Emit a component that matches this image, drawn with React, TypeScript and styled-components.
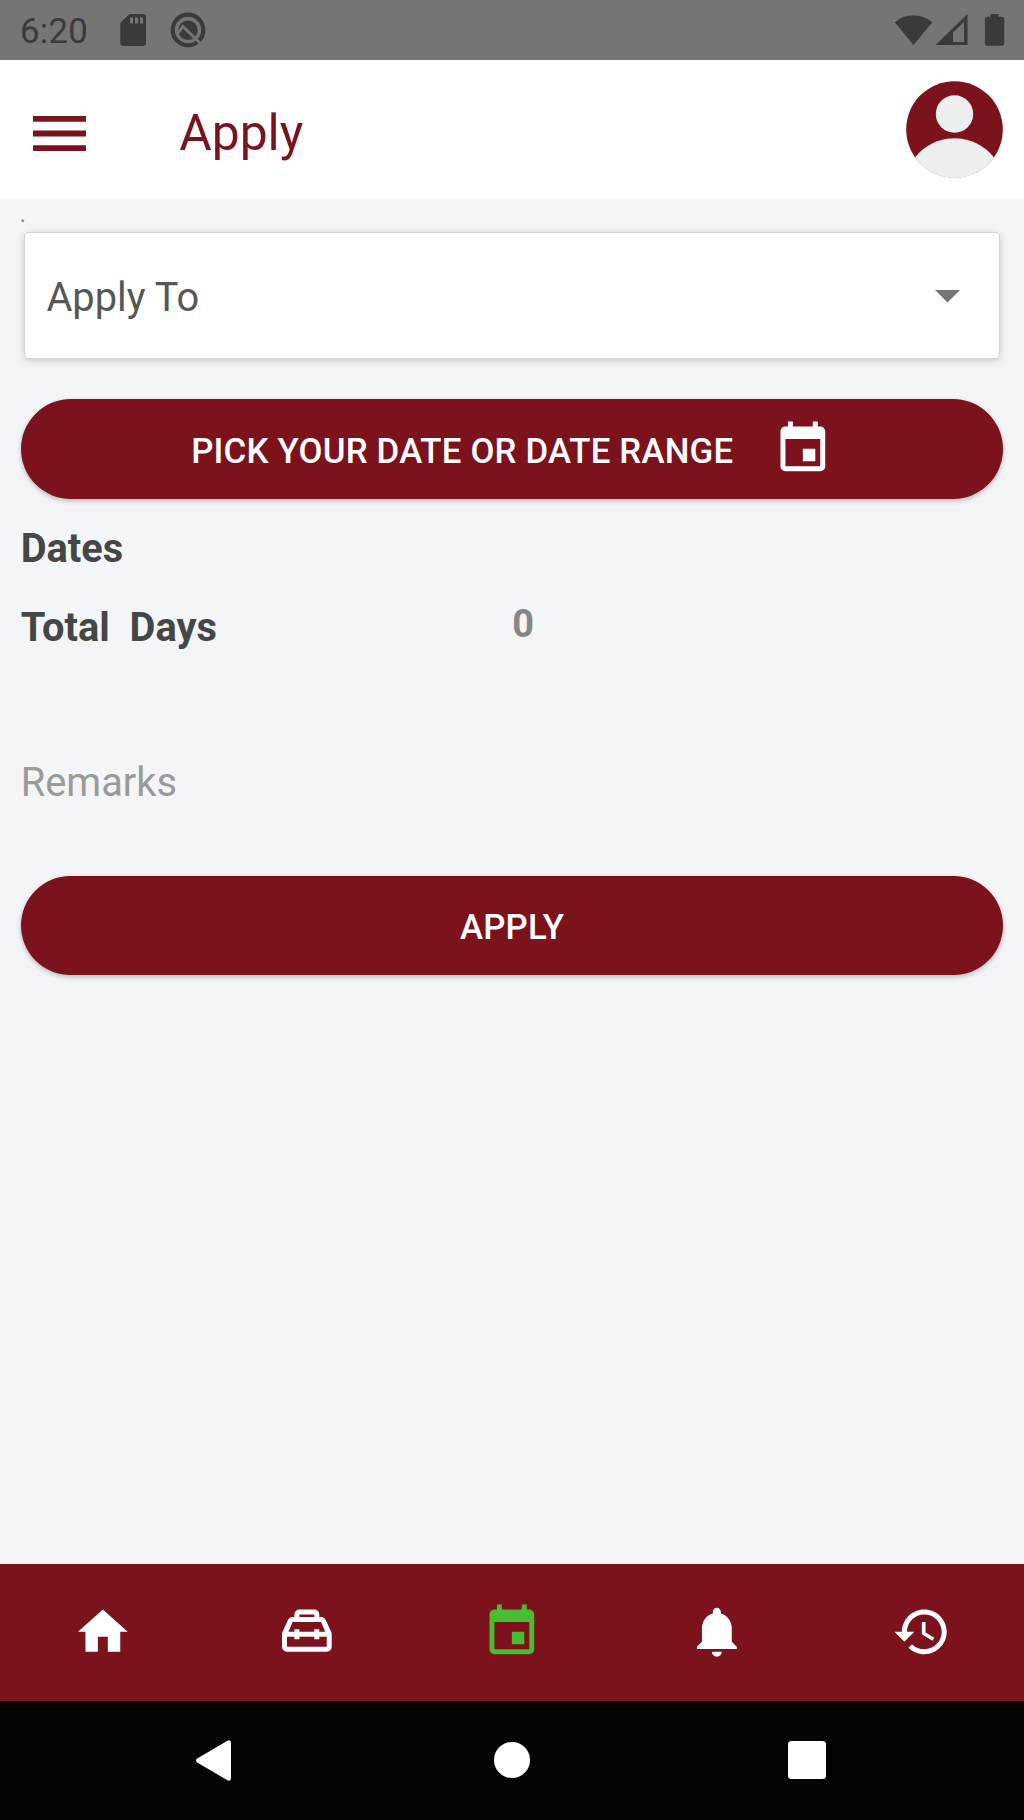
import React from 'react';
import styled, { createGlobalStyle } from 'styled-components';

const maroon = '#7c121b';

const GlobalStyle = createGlobalStyle`
  * { box-sizing: border-box; }
  body { margin: 0; background: #f4f5f7; font-family: Roboto, 'Liberation Sans', sans-serif; }
  svg { display: block; flex: none; }
`;

const Screen = styled.div`
  width: 1024px;
  height: 1820px;
  display: flex;
  flex-direction: column;
  overflow: hidden;
  background: #f4f5f7;
`;

const StatusBar = styled.header`
  flex: none;
  height: 59.7px;
  display: flex;
  justify-content: space-between;
  background: #757575;
  color: #3a3a3a;
`;

const StatusGroup = styled.div`
  display: flex;
  align-items: flex-start;
`;

const Clock = styled.span`
  width: 100px;
  padding-left: 20px;
  font-size: 34.8px;
  line-height: 63px;
  letter-spacing: 0.2px;
`;

const AppBar = styled.div`
  flex: none;
  height: 139.5px;
  display: flex;
  align-items: center;
  padding: 0 20.7px 0 32.6px;
  background: #fff;
`;

const MenuButton = styled.button`
  border: 0;
  padding: 8px 0 0;
  background: none;
`;

const Title = styled.h1`
  flex: 1;
  margin: 0;
  padding: 8px 0 0 93.6px;
  color: ${maroon};
  font-size: 49.8px;
  line-height: 60px;
  font-weight: 400;
`;

const Form = styled.main`
  flex: 1;
  display: flex;
  flex-direction: column;
  padding: 14px 20.7px 0;
`;

const Dot = styled.span`
  height: 19.4px;
  margin-left: -0.7px;
  font-size: 20px;
  font-weight: 500;
  line-height: 5px;
  color: #8c8c8c;
`;

const Select = styled.div`
  height: 125px;
  margin: 0 4.7px;
  display: flex;
  align-items: center;
  justify-content: space-between;
  padding: 3px 38.2px 0 21px;
  border-radius: 4px;
  background: #fff;
  box-shadow: 0 0 0 1px #d3d4d5, 0 2px 8px rgba(0, 0, 0, 0.22);
  color: #555756;
  font-size: 39.8px;
  line-height: 46px;

  span { padding-top: 3px; }
`;

const PillButton = styled.button<{ $top: number }>`
  flex: none;
  height: 99.5px;
  margin-top: ${p => p.$top}px;
  padding: 0;
  border: 0;
  border-radius: 50px;
  display: flex;
  align-items: center;
  justify-content: center;
  gap: 39.8px;
  background: ${maroon};
  box-shadow: 0 2px 5px rgba(0, 0, 0, 0.25);
  color: #fff;
  font: 500 34.8px/44px Roboto, 'Liberation Sans', sans-serif;
  letter-spacing: 0.2px;

  span { padding-top: 4px; }
`;

const Row = styled.div<{ $top: number }>`
  display: grid;
  grid-template-columns: 491.5px 1fr;
  margin-top: ${p => p.$top}px;
  font-size: 39.8px;
  line-height: 46px;
  font-weight: 700;
`;

const Label = styled.span`
  color: #454746;
  white-space: pre;
`;

const Value = styled.span`
  color: #858786;
  font-size: 38px;
  line-height: 39px;
`;

const Remarks = styled.div`
  margin-top: 109.2px;
  color: #999b9a;
  font-size: 39.8px;
  line-height: 46px;
`;

const TabBar = styled.nav`
  flex: none;
  height: 136.6px;
  display: grid;
  grid-template-columns: repeat(5, 1fr);
  align-items: center;
  justify-items: center;
  background: ${maroon};
`;

const Tab = styled.div<{ $active?: boolean }>`
  color: ${p => (p.$active ? '#46bd32' : '#fff')};
`;

const SystemNav = styled.footer`
  flex: none;
  height: 119.5px;
  display: flex;
  align-items: center;
  justify-content: space-between;
  padding: 0 198px 0 196px;
  background: #040404;
`;

const HomeDot = styled.span`
  width: 36px;
  height: 36px;
  margin-left: 4.6px;
  border-radius: 50%;
  background: #fff;
`;

const RecentSquare = styled.span`
  width: 37.6px;
  height: 37.6px;
  border-radius: 3.5px;
  background: #fff;
`;

const Icon = ({ d }: { d: string }) => (
  <svg width="59.7" height="59.7" viewBox="0 0 24 24" fill="currentColor" fillRule="evenodd">
    <path d={d} />
  </svg>
);

const paths = {
  home: 'M10 20v-6h4v6h5v-8h3L12 3 2 12h3v8z',
  toolbox:
    'M9 3h6a2 2 0 0 1 2 2v1h.7c.8 0 1.5.5 1.9 1.2l2.2 4.9q.2.4.2.9v5a2 2 0 0 1-2 2H4a2 2 0 0 1-2-2v-5q0-.5.2-.9l2.2-4.9C4.8 6.5 5.5 6 6.3 6H7V5a2 2 0 0 1 2-2zM9 5v1h6V5zM6.3 8l-1.7 4H7v-1h2v1h6v-1h2v1h2.4l-1.7-4zM4 14v4h16v-4h-3v1h-2v-1H9v1H7v-1z',
  event:
    'M17 12h-5v5h5v-5zM16 1v2H8V1H6v2H5c-1.11 0-1.99.9-1.99 2L3 19c0 1.1.89 2 2 2h14c1.1 0 2-.9 2-2V5c0-1.1-.9-2-2-2h-1V1h-2zm3 18H5V8h14v11z',
  bell:
    'M14 20a2 2 0 0 1-4 0zM12 2.3c.9 0 1.6.7 1.6 1.6v.7C16.2 5.3 18 7.700 18 10.500V16l2 2v.9H4V18l2-2v-5.500C6 7.700 7.800 5.300 10.400 4.600V3.900c0-.9.7-1.600 1.600-1.600z',
  history:
    'M13 3c-4.97 0-9 4.03-9 9H1l3.89 3.89.07.14L9 12H6c0-3.87 3.13-7 7-7s7 3.13 7 7-3.13 7-7 7c-1.93 0-3.68-.79-4.94-2.06l-1.42 1.42C8.27 19.99 10.51 21 13 21c4.97 0 9-4.03 9-9s-4.03-9-9-9zm-1 5v5l4.28 2.54.72-1.21-3.5-2.08V8H12z',
};

const StatusIcons = () => (
  <svg width="110" height="60" viewBox="0 0 110 60" fill="currentColor">
    <path
      fillRule="evenodd"
      d="M29.5 14H43a3 3 0 0 1 3 3v26a3 3 0 0 1-3 3H23.300a3 3 0 0 1-3-3V23zM30 17.500v6h3v-6zM35 17.500v6h3v-6zM40 17.500v6h3v-6z"
    />
    <circle cx="88" cy="30" r="15.300" fill="none" stroke="currentColor" strokeWidth="4.200" />
    <circle cx="88" cy="30.300" r="9.800" />
    <path d="M77.500 33.500l5.500-7 18.500 18" fill="none" stroke="#757575" strokeWidth="3" />
  </svg>
);

const SignalIcons = () => (
  <svg width="130" height="60" viewBox="894 0 130 60" fill="currentColor">
    <path d="M894.700 22.300a28.300 28.300 0 0 1 37.600 0L913.500 45z" />
    <path fillRule="evenodd" d="M967.500 14v31H935.500zM964 22l-11 10.500V42h11z" />
    <path d="M990.500 14h8v2.700h3.500a2.300 2.300 0 0 1 2.300 2.300v24.500a2.300 2.300 0 0 1-2.300 2.300h-14.800a2.300 2.300 0 0 1-2.300-2.300V19a2.300 2.300 0 0 1 2.300-2.300h3.300z" />
  </svg>
);

const Avatar = () => (
  <svg width="97" height="97" viewBox="0 0 97 97">
    <circle cx="48.500" cy="48.500" r="48.300" fill={maroon} />
    <circle cx="48.500" cy="33" r="18.700" fill="#edeeee" />
    <path d="M9 76.700a50.200 50.200 0 0 1 79 0a48.600 48.600 0 0 1-79 0z" fill="#edeeee" stroke="#edeeee" strokeWidth="0.400" />
  </svg>
);

export default function App() {
  return (
    <>
      <GlobalStyle />
      <Screen>
        <StatusBar>
          <StatusGroup>
            <Clock>6:20</Clock>
            <StatusIcons />
          </StatusGroup>
          <SignalIcons />
        </StatusBar>
        <AppBar>
          <MenuButton aria-label="Menu">
            <svg width="53" height="35" viewBox="0 0 53 35" fill={maroon}>
              <path d="M0 0h53v5.800H0zM0 14.600h53v5.800H0zM0 29.200h53v5.800H0z" />
            </svg>
          </MenuButton>
          <Title>Apply</Title>
          <Avatar />
        </AppBar>
        <Form>
          <Dot>.</Dot>
          <Select>
            <span>Apply To</span>
            <svg width="25" height="13" viewBox="0 0 25 13" fill="#757575">
              <path d="M0 0h25L12.500 12.500z" />
            </svg>
          </Select>
          <PillButton $top={41.8}>
            <span>PICK YOUR DATE OR DATE RANGE</span>
            <Icon d={paths.event} />
          </PillButton>
          <Row $top={27.5}>
            <Label>Dates</Label>
          </Row>
          <Row $top={32.6}>
            <Label>{'Total  Days'}</Label>
            <Value>0</Value>
          </Row>
          <Remarks>Remarks</Remarks>
          <PillButton $top={69.5}>
            <span>APPLY</span>
          </PillButton>
        </Form>
        <TabBar>
          <Tab><Icon d={paths.home} /></Tab>
          <Tab><Icon d={paths.toolbox} /></Tab>
          <Tab $active><Icon d={paths.event} /></Tab>
          <Tab><Icon d={paths.bell} /></Tab>
          <Tab><Icon d={paths.history} /></Tab>
        </TabBar>
        <SystemNav>
          <svg width="35" height="41" viewBox="0 0 35 41" fill="#fff">
            <path d="M1.200 18.500 31 1q4-2 4 2v35q0 4-4 2L1.200 22.500q-2.400-2 0-4z" />
          </svg>
          <HomeDot />
          <RecentSquare />
        </SystemNav>
      </Screen>
    </>
  );
}
